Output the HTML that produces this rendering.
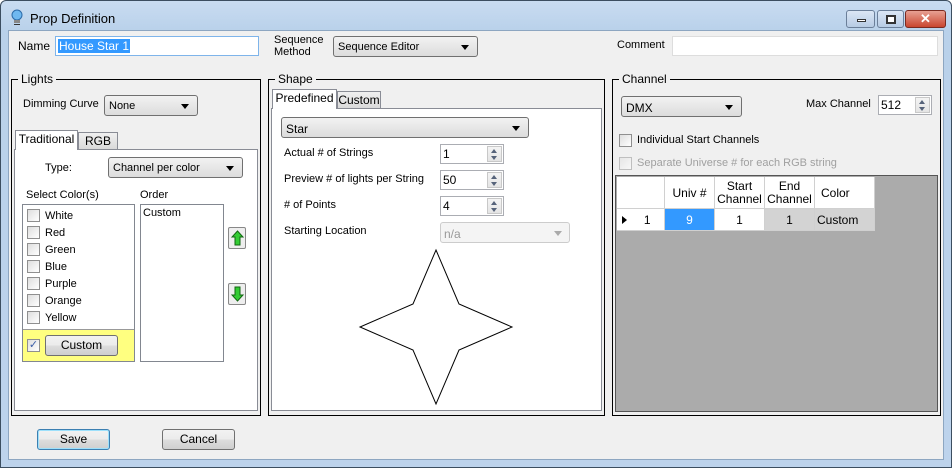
<!DOCTYPE html><html><head><style>
*{box-sizing:border-box}body{margin:0;width:952px;height:468px;background:#fff;font-family:"Liberation Sans",sans-serif;font-size:11px;color:#000;position:relative;overflow:hidden}
div,span{position:absolute}
.frame{left:0;top:0;width:952px;height:468px;background:linear-gradient(#c9dcf1,#b9d1ea 30px,#bdd3ec);border:1px solid #3c4e60;border-radius:6px 6px 0 0}
.client{left:8px;top:30px;width:936px;height:430px;background:#f0f0f0;border:1px solid #8da6c1}
.t{white-space:nowrap}
.inp{background:#fff;border:1px solid #abadb3}
.cb{background:linear-gradient(#f2f2f2,#dcdcdc);border:1px solid #707070;border-radius:3px}
.cb:after{content:"";position:absolute;right:8px;top:8px;border:4px solid transparent;border-top:5px solid #000;border-bottom:0}
.grp{border:1px solid #000}
.leg{background:#f0f0f0;padding:0 3px;top:-8px;left:6px;font-size:12px}
.page{background:#fff;border:1px solid #898c95}
.tab{border:1px solid #898c95;border-bottom:none;background:linear-gradient(#f0f0f0,#d8d8d8);text-align:center;line-height:17px;font-size:12px}
.tab.a{background:#fff;z-index:2}
.chk{width:13px;height:13px;border:1px solid #8f8f8f;background:linear-gradient(135deg,#dedede,#fff)}
.spin{width:64px;height:20px}
.spin b,.arr{position:absolute;right:1px;top:1px;width:15px;height:16px;border:1px solid #c8c8c8;background:linear-gradient(#f4f4f4,#e4e4e4)}
.spin b:before,.arr:before{content:"";position:absolute;left:3px;top:2px;border:3px solid transparent;border-bottom:4px solid #56637a;border-top:0}
.spin b:after,.arr:after{content:"";position:absolute;left:3px;top:9px;border:3px solid transparent;border-top:4px solid #56637a;border-bottom:0}
.btn{background:linear-gradient(#f2f2f2,#ebebeb 50%,#dddddd 51%,#cfcfcf);border:1px solid #707070;border-radius:3px;text-align:center;line-height:19px;font-size:12px}
.cell{border-right:1px solid #d0d0d0;border-bottom:1px solid #d0d0d0;background:#fff;text-align:center;line-height:13px;font-size:12px}
</style></head><body>
<div class="frame"></div>
<svg style="position:absolute;left:10px;top:9px" width="14" height="18"><circle cx="7" cy="6" r="5" fill="#6fb8f0" stroke="#2b6aa8"/><rect x="4" y="11" width="6" height="3" fill="#888"/><rect x="4" y="15" width="6" height="1" fill="#333"/></svg>
<span class="t" style="left:30px;top:11px;font-size:13px">Prop Definition</span>
<div style="left:846px;top:10px;width:29px;height:18px;border:1px solid #6b7f99;border-radius:3px;background:linear-gradient(#dbe7f5,#b7cbe4)"><span style="left:10px;top:8px;width:9px;height:3px;background:#fff;border:1px solid #333"></span></div>
<div style="left:877px;top:10px;width:27px;height:18px;border:1px solid #6b7f99;border-radius:3px;background:linear-gradient(#dbe7f5,#b7cbe4)"><span style="left:8px;top:4px;width:10px;height:9px;border:2px solid #333;background:#fff"></span></div>
<div style="left:905px;top:10px;width:41px;height:18px;border:1px solid #7a2a20;border-radius:3px;background:linear-gradient(#e8a193,#c9452f);color:#fff;font-weight:bold;text-align:center;line-height:16px;font-size:13px">✕</div>
<div class="client"></div>
<span class="t" style="left:18px;top:39px;font-size:12px">Name</span>
<div class="inp" style="left:55px;top:36px;width:204px;height:20px;border-color:#7eb4ea"><span style="left:2px;top:2px;background:#3399ff;color:#fff;padding:0 1px;font-size:12px">House Star 1</span></div>
<span class="t" style="left:274px;top:34px;line-height:12px">Sequence<br>Method</span>
<div class="cb" style="left:333px;top:36px;width:145px;height:21px"><span style="left:4px;top:4px">Sequence Editor</span></div>
<span class="t" style="left:617px;top:39px">Comment</span>
<div class="inp" style="left:672px;top:36px;width:266px;height:20px;border-color:#ddd"></div>

<div class="grp" style="left:11px;top:79px;width:250px;height:337px"><span class="leg t">Lights</span></div>
<span class="t" style="left:23px;top:98px">Dimming Curve</span>
<div class="cb" style="left:104px;top:95px;width:94px;height:21px"><span style="left:4px;top:4px">None</span></div>
<div class="tab a t" style="left:15px;top:130px;width:63px;height:20px">Traditional</div>
<div class="tab t" style="left:78px;top:132px;width:40px;height:18px">RGB</div>
<div class="page" style="left:14px;top:149px;width:244px;height:262px"></div>
<span class="t" style="left:45px;top:162px">Type:</span>
<div class="cb" style="left:108px;top:157px;width:135px;height:21px"><span style="left:4px;top:4px">Channel per color</span></div>
<span class="t" style="left:26px;top:189px">Select Color(s)</span>
<span class="t" style="left:140px;top:189px">Order</span>
<div style="left:22px;top:204px;width:113px;height:158px;border:1px solid #828790;background:#fff"></div>
<div style="left:23px;top:329px;width:111px;height:32px;background:#ffff80;border-top:1px solid #999"></div>
<div class="chk" style="left:27px;top:209px"></div><span class="t" style="left:45px;top:210px">White</span>
<div class="chk" style="left:27px;top:226px"></div><span class="t" style="left:45px;top:227px">Red</span>
<div class="chk" style="left:27px;top:243px"></div><span class="t" style="left:45px;top:244px">Green</span>
<div class="chk" style="left:27px;top:260px"></div><span class="t" style="left:45px;top:261px">Blue</span>
<div class="chk" style="left:27px;top:277px"></div><span class="t" style="left:45px;top:278px">Purple</span>
<div class="chk" style="left:27px;top:294px"></div><span class="t" style="left:45px;top:295px">Orange</span>
<div class="chk" style="left:27px;top:311px"></div><span class="t" style="left:45px;top:312px">Yellow</span>
<div class="chk" style="left:27px;top:339px;color:#3b5ea8;font-size:11px;line-height:11px;text-align:center">✓</div>
<div class="btn" style="left:45px;top:335px;width:73px;height:21px">Custom</div>
<div style="left:140px;top:204px;width:84px;height:158px;border:1px solid #828790;background:#fff"><span class="t" style="left:2px;top:2px">Custom</span></div>
<div style="left:228px;top:227px;width:18px;height:22px;border:1px solid #888;border-radius:2px;background:#eee"><svg style="position:absolute;left:2px;top:2px" width="13" height="16"><path d="M6.5 1L12 7H9V15H4V7H1Z" fill="#3c3" stroke="#161"/></svg></div>
<div style="left:228px;top:283px;width:18px;height:22px;border:1px solid #888;border-radius:2px;background:#eee"><svg style="position:absolute;left:2px;top:2px" width="13" height="16"><path d="M6.5 15L12 9H9V1H4V9H1Z" fill="#3c3" stroke="#161"/></svg></div>

<div class="grp" style="left:268px;top:79px;width:337px;height:337px"><span class="leg t">Shape</span></div>
<div class="tab a t" style="left:272px;top:89px;width:65px;height:20px">Predefined</div>
<div class="tab t" style="left:337px;top:91px;width:44px;height:18px">Custom</div>
<div class="page" style="left:271px;top:108px;width:331px;height:303px"></div>
<div class="cb" style="left:281px;top:117px;width:248px;height:21px"><span style="left:4px;top:4px;font-size:12px">Star</span></div>
<span class="t" style="left:284px;top:147px">Actual # of Strings</span>
<div class="inp spin" style="left:440px;top:144px"><span style="left:2px;top:2px;font-size:12px">1</span><b></b></div>
<span class="t" style="left:284px;top:173px">Preview # of lights per String</span>
<div class="inp spin" style="left:440px;top:170px"><span style="left:2px;top:2px;font-size:12px">50</span><b></b></div>
<span class="t" style="left:284px;top:199px"># of Points</span>
<div class="inp spin" style="left:440px;top:196px"><span style="left:2px;top:2px;font-size:12px">4</span><b></b></div>
<span class="t" style="left:284px;top:225px">Starting Location</span>
<div style="left:440px;top:222px;width:130px;height:21px;border:1px solid #ccc;border-radius:3px;background:#f4f4f4;color:#999"><span style="left:3px;top:4px;font-size:12px">n/a</span><span style="right:7px;top:8px;border:4px solid transparent;border-top:5px solid #aaa;border-bottom:0"></span></div>
<svg style="position:absolute;left:0;top:0" width="952" height="468"><path d="M436 250L459 304L512 327L459 350L436 404L413 350L360 327L413 304Z" fill="#fff" stroke="#000"/></svg>

<div class="grp" style="left:612px;top:79px;width:329px;height:337px"><span class="leg t">Channel</span></div>
<div class="cb" style="left:621px;top:96px;width:121px;height:21px"><span style="left:4px;top:4px;font-size:12px">DMX</span></div>
<span class="t" style="left:806px;top:98px">Max Channel</span>
<div class="inp" style="left:878px;top:95px;width:54px;height:20px"><span style="left:2px;top:2px;font-size:12px">512</span><i class="arr"></i></div>
<div class="chk" style="left:619px;top:134px"></div><span class="t" style="left:637px;top:134px">Individual Start Channels</span>
<div class="chk" style="left:619px;top:157px;opacity:.5"></div><span class="t" style="left:637px;top:157px;color:#a0a0a0">Separate Universe # for each RGB string</span>
<div style="left:615px;top:175px;width:323px;height:237px;background:#ababab;border:1px solid #555"></div>
<div class="cell" style="left:617px;top:177px;width:48px;height:32px"></div>
<div class="cell" style="left:665px;top:177px;width:50px;height:32px;line-height:32px">Univ #</div>
<div class="cell" style="left:715px;top:177px;width:50px;height:32px;padding-top:3px">Start<br>Channel</div>
<div class="cell" style="left:765px;top:177px;width:50px;height:32px;padding-top:3px">End<br>Channel</div>
<div class="cell" style="left:815px;top:177px;width:60px;height:32px;line-height:32px;text-align:left;padding-left:6px">Color</div>
<div class="cell" style="left:617px;top:209px;width:48px;height:22px;line-height:22px">&nbsp;&nbsp;&nbsp;&nbsp;1<span style="left:5px;top:7px;border:4px solid transparent;border-left:5px solid #000;border-right:0"></span></div>
<div class="cell" style="left:665px;top:209px;width:50px;height:22px;line-height:22px;background:#3399ff;color:#fff">9</div>
<div class="cell" style="left:715px;top:209px;width:50px;height:22px;line-height:22px">1</div>
<div class="cell" style="left:765px;top:209px;width:50px;height:22px;line-height:22px;background:#d3d3d3">1</div>
<div class="cell" style="left:815px;top:209px;width:60px;height:22px;line-height:22px;background:#d3d3d3;text-align:left;padding-left:2px">Custom</div>

<div class="btn" style="left:37px;top:429px;width:73px;height:21px;border-color:#3c7fb1;box-shadow:inset 0 0 0 1px #9de0fb">Save</div>
<div class="btn" style="left:162px;top:429px;width:73px;height:21px">Cancel</div>
</body></html>
